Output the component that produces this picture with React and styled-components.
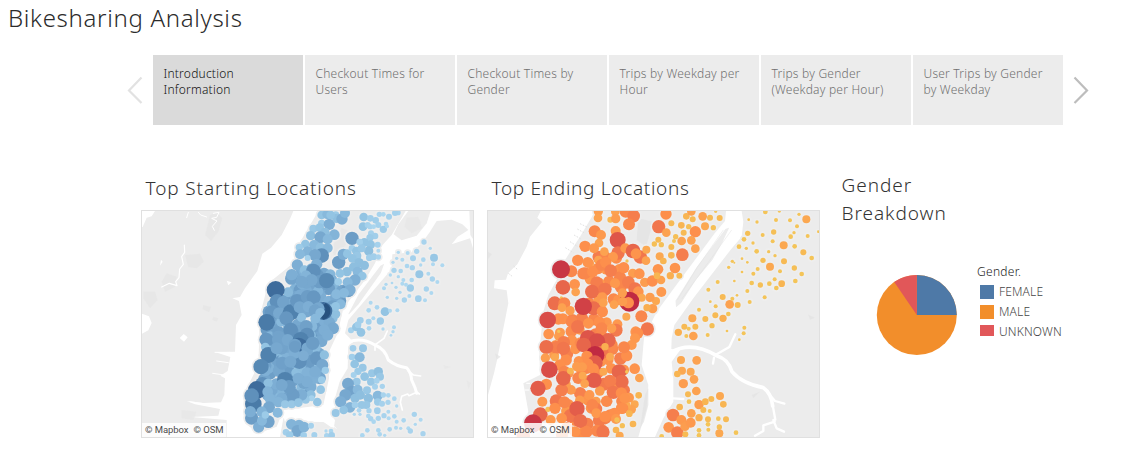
import React from "react";
import styled, { createGlobalStyle } from "styled-components";

const GlobalStyle = createGlobalStyle`
  * { box-sizing: border-box; }
  body { margin: 0; background: #fff; font-family: "Noto Sans", "Open Sans", sans-serif; font-weight: 300; }
`;

const Dashboard = styled.main`
  width: 1129px;
  height: 467px;
  overflow: hidden;
  background: #fff;
`;
const Title = styled.h1`
  margin: 0;
  padding: 1px 0 0 8px;
  height: 55px;
  font-size: 24px;
  line-height: 34px;
  font-weight: 300;
  letter-spacing: 0.68px;
  color: #2b2b2b;
`;
const StoryNav = styled.nav`
  display: flex;
  align-items: center;
  padding-left: 127px;
  height: 70px;
`;
const StoryPoints = styled.div`
  display: flex;
  gap: 2px;
  margin: 0 10px;
`;
const StoryPoint = styled.div`
  width: 150px;
  height: 70px;
  padding: 11px 8px 0 10.5px;
  font-size: 12px;
  line-height: 16px;
  letter-spacing: 0.22px;
  white-space: pre-line;
  background: ${(p) => (p.$active ? "#dadada" : "#ececec")};
  color: ${(p) => (p.$active ? "#111" : "#707070")};
`;
const Arrow = styled.svg`
  display: block;
  width: 16px;
  height: 28px;
  fill: none;
  stroke: ${(p) => (p.$dim ? "#e2e2e2" : "#bdbdbd")};
  stroke-width: 2.2;
`;
const Panels = styled.div`
  display: flex;
  padding: 46px 0 0 141px;
`;
const Panel = styled.section`
  width: ${(p) => p.$w}px;
`;
const PanelTitle = styled.h2`
  margin: ${(p) => (p.$tall ? "0" : "3px 0 -3px")};
  height: ${(p) => (p.$tall ? 56 : 39)}px;
  padding-left: 4.5px;
  font-size: 19px;
  line-height: 28px;
  font-weight: 300;
  letter-spacing: ${(p) => p.$track}px;
  white-space: pre-line;
  color: #333;
`;
const MapFrame = styled.div`
  position: relative;
  width: 333px;
  height: 228px;
  border: 1px solid #e0e0e0;
  overflow: hidden;
`;
const MapDrawing = styled.svg`
  display: block;
  width: 331px;
  height: 226px;
`;
const Attribution = styled.div`
  position: absolute;
  left: 0;
  bottom: 0;
  width: 84px;
  height: 14px;
  padding-left: 3px;
  display: flex;
  gap: 5px;
  font: 400 9.5px/14px Roboto, sans-serif;
  letter-spacing: -0.06px;
  color: #4c4c4c;
  background: rgba(255, 255, 255, 0.85);
  white-space: nowrap;
`;
const GenderChart = styled.div`
  display: flex;
  padding: 36px 0 0 39px;
`;
const Pie = styled.svg`
  display: block;
  width: 81px;
  height: 81px;
  margin-top: 12px;
`;
const Legend = styled.div`
  margin-left: 20px;
  font-size: 12px;
  color: #444;
`;
const LegendTitle = styled.div`
  height: 19px;
  line-height: 17px;
  color: #222;
  letter-spacing: 0.3px;
`;
const LegendItem = styled.div`
  display: flex;
  height: 20px;
  padding-left: 3px;
  line-height: 19px;
  letter-spacing: 0.15px;
`;
const Swatch = styled.span`
  width: 14px;
  height: ${(p) => p.$h}px;
  margin: 3px 5px 0 0;
  background: ${(p) => p.$color};
`;

/* Deterministic pseudo-random numbers, so the stations never move. */
function seeded(seed) {
  let s = seed;
  return () => {
    s = (s * 16807) % 2147483647;
    return s / 2147483647;
  };
}

/* Fills rows [y, left, right] with overlapping stations. */
function scatter(rows, step, seed, rMin, rMax) {
  const rnd = seeded(seed);
  const out = [];
  rows.forEach(([y, a, b]) => {
    for (let x = a; x <= b; x += step) {
      const r = rMin + (rMax - rMin) * rnd();
      out.push([x + (rnd() - 0.5) * step * 0.7, y + (rnd() - 0.5) * 22, r]);
    }
  });
  for (let i = out.length - 1; i > 0; i--) {
    const j = Math.floor(rnd() * (i + 1));
    [out[i], out[j]] = [out[j], out[i]];
  }
  return out;
}

const BLUES = [[6, 174, 216, 240], [9, 165, 209, 236], [13, 147, 196, 227], [17, 125, 174, 212], [21, 102, 151, 193], [24, 80, 130, 174], [27, 62, 108, 156]];
const REDS = [[7, 244, 196, 88], [10, 248, 181, 82], [13, 252, 162, 80], [17, 253, 143, 76], [20, 241, 118, 77], [25, 217, 77, 72], [28, 192, 42, 66]];

function shade(scale, v) {
  if (v <= scale[0][0]) return `rgb(${scale[0].slice(1).join(",")})`;
  for (let i = 1; i < scale.length; i++) {
    if (v <= scale[i][0]) {
      const [a, b] = [scale[i - 1], scale[i]];
      const t = (v - a[0]) / (b[0] - a[0]);
      return `rgb(${[1, 2, 3].map((k) => Math.round(a[k] + (b[k] - a[k]) * t)).join(",")})`;
    }
  }
  return `rgb(${scale[scale.length - 1].slice(1).join(",")})`;
}

const startDense = scatter(
  [[325, 475, 585], [350, 465, 605], [375, 455, 640], [400, 435, 615], [425, 412, 605], [450, 408, 595], [475, 405, 590], [500, 400, 590], [525, 400, 568], [550, 400, 560], [575, 407, 560], [600, 387, 557], [625, 392, 555], [650, 387, 552], [675, 387, 540], [698, 395, 530]],
  18, 71, 14, 20.5
);

const startStations = [
  [560,150,13],[577,148,15],[602,150,11],[560,175,11],[583,178,17],[535,191,12],[554,188,13],[570,202,14],[598,209,16],[527,212,14],[556,217,18],[578,223,15],[511,237,13],[493,247,11],[537,240,15],[556,247,14],[578,249,15],[518,260,16],[495,268,15],[560,272,22],[540,270,18],[518,279,9],[487,300,17],[545,298,17],[530,312,17],[508,315,14],[470,329,17],[535,318,22],[513,332,16],[553,350,20],[575,347,23],[530,345,18],[500,350,18],
  [605,160,14],[621,162,17],[630,144,15],[587,150,13],[651,220,20],[611,292,20],[625,268,17],[637,266,13],
  [686,156,13],[706,160,10],[684,185,13],[698,180,9],[722,166,10],[733,148,8],[745,148,7],[762,155,9],[789,143,8],[780,144,9],[705,185,8],[716,185,7],[730,180,9],[745,193,11],[753,177,7],[756,184,6],[708,205,9],[720,213,10],[705,218,11],[688,232,13],[674,231,10],[707,239,13],[728,239,9],[701,258,14],[730,257,6],[716,275,10],[730,276,8],[651,250,10],[664,258,13],[680,250,12],[667,272,12],[652,280,13],[672,293,14],[688,301,14],[703,278,10],[656,306,14],[636,320,14],[615,325,13],[668,320,15],[682,333,13],[660,345,17],[638,352,15],[610,350,11],[645,375,17],[627,384,15],[604,388,15],[617,418,15],[602,447,14],[589,432,14],[602,424,13],
  [422,375,27],[426,409,22],[410,442,21],[395,472,25],[445,412,19],[432,445,18],[467,442,24],[454,460,21],[486,408,21],[517,395,20],[536,397,21],[494,427,18],[520,425,17],[565,438,27],[550,430,18],[540,437,19],[556,444,15],[541,461,15],[594,490,18],[567,495,17],[578,510,17],[394,524,21],[391,546,13],[400,570,24],[378,605,23],[430,525,19],[440,550,19],[425,550,18],[467,495,22],[458,525,18],[516,510,22],[497,525,24],[491,545,27],[480,540,19],[493,590,22],[478,565,17],[466,590,18],[517,550,18],[533,535,20],[546,580,21],[568,570,14],[562,600,18],[571,616,11],[540,620,17],[560,645,11],[557,674,13],[528,690,14],[547,711,13],[530,700,9],[512,704,12],[500,690,17],[474,690,20],[450,645,24],[462,665,20],[440,660,18],[490,640,17],[516,650,17],[440,700,17],[430,711,16],[450,718,12],[470,718,12],[490,713,13],
  [382,658,22],[399,655,14],[366,675,27],[355,717,25],[350,692,22],[350,759,20],[346,740,17],[398,680,16],[404,700,16],[402,727,18],[380,740,16],[428,743,15],[400,770,19],[371,786,17],[381,767,15],[391,750,11],
  [469,778,16],[492,780,16],[487,798,18],[507,786,16],[528,782,9],[453,802,10],[464,810,11],[506,811,10],[538,810,9],[573,798,5],[588,798,7],[575,812,8],[590,811,10],
  [867,231,8],[886,250,5],[845,259,8],[818,264,6],[790,262,5],[897,278,12],[922,301,6],[785,280,5],[802,284,6],[834,280,9],[865,284,7],[894,298,6],[774,292,5],[816,303,7],[832,308,8],[857,300,5],[853,328,12],[880,326,6],[892,342,8],[777,316,8],[797,318,7],[766,330,5],[790,335,5],[805,345,6],[830,345,7],[907,351,6],[753,358,5],[771,354,4],[802,356,6],[826,369,11],[874,372,8],[889,384,6],[747,370,6],[783,367,5],[813,359,6],[795,382,5],[757,397,5],[785,400,5],[808,405,8],[850,401,10],[870,406,6],[823,393,6],[707,413,6],[726,427,7],[750,440,13],[765,437,6],[787,436,6],[701,436,7],[676,466,10],[701,470,9],[715,460,6],[736,468,11],[648,496,9],[664,486,13],[678,502,13],[669,479,10],[702,490,7],[744,492,5],[777,487,6],[774,500,5],[768,511,4],
  [654,550,10],[684,550,12],[651,576,10],[674,577,15],[659,597,13],[683,608,12],[669,619,11],[689,635,13],[711,625,12],[730,620,14],[735,635,12],[656,630,9],[665,650,12],[639,656,18],[650,681,19],[631,690,18],[617,710,17],[645,727,16],[626,735,13],[660,700,14],[668,674,15],[676,690,14],[696,676,12],[708,650,12],[725,647,9],[742,664,8],[720,665,9],[700,700,14],[694,720,12],[728,692,15],[728,711,11],[745,690,8],[727,737,10],[702,737,8],[680,720,12],[660,720,10],[672,736,7],[602,744,12],[707,761,8],[741,716,9],[760,691,7],[778,701,7],[759,712,8],[760,740,6],[747,752,8],[716,770,7],[730,760,8],[700,753,7],[785,723,5],[761,760,6],[785,770,6],[778,754,7],[797,790,5],[806,766,7],[838,748,8],[857,764,6],[841,778,5],[820,790,6],[826,798,8],[864,806,8],[783,788,6],[764,793,7],[730,796,7],[697,796,7],[734,808,7],[749,811,5],[682,811,7],[658,748,5],[675,748,5]
];

const endDense = scatter(
  [[285, 320, 440], [315, 315, 430], [345, 330, 430], [375, 350, 440], [410, 330, 420], [440, 330, 390], [470, 245, 410], [500, 240, 420], [530, 235, 415], [560, 230, 410], [590, 265, 430], [620, 265, 430], [650, 265, 435], [680, 270, 445], [710, 260, 440], [740, 260, 430], [770, 290, 400], [800, 290, 375]],
  32, 37, 14, 19.5
);

const endStations = [
  [355,139,14],[354,159,13],[406,140,13],[391,164,9],[407,161,14],[437,140,18],[461,153,19],[447,178,18],[344,199,18],[363,210,15],[407,198,15],[357,234,13],[315,244,17],[342,250,15],[413,225,24],[373,260,13],[293,286,17],[323,292,16],[414,264,20],[436,250,15],[459,258,22],[481,276,20],[499,254,12],[498,287,13],[468,266,16],[399,276,15],[355,285,13],[441,288,5],[274,319,18],[243,313,27],[249,367,22],[284,358,16],[287,381,13],[244,399,5],[315,325,18],[338,320,17],[365,300,18],[377,292,17],[392,317,19],[431,308,17],[458,325,14],[478,326,16],[350,353,19],[375,373,20],[336,380,21],[405,355,15],[445,352,19],[465,372,20],[475,380,16],[494,352,14],[517,348,17],[543,345,13],[534,313,16],[531,332,10],[571,332,11],[598,332,9],[585,309,16],[544,381,15],[518,431,14],[528,408,12],[510,397,14],[501,428,11],[485,398,12],
  [224,415,21],[253,415,18],[270,437,14],[246,428,13],[235,462,17],[203,465,25],[341,430,21],[310,424,26],[367,440,17],[367,397,15],[370,413,13],[415,405,16],[402,419,13],[430,390,16],[448,410,30],[445,413,17],[427,384,14],[428,410,14],[439,455,12],[484,454,18],[467,500,16],[502,492,20],[473,505,17],[465,520,15],[455,540,15],[440,572,17],[464,611,16],[478,639,13],[432,547,18],[206,507,16],[236,513,14],[236,499,5],[251,532,19],[228,547,19],[199,546,21],[250,550,20],[196,579,14],[225,577,12],[240,600,17],[208,614,25],[253,620,18],[199,658,17],[174,670,23],[187,710,15],[181,749,22],[204,733,8],[159,775,27],[212,765,15],[229,708,20],[225,730,17],[245,675,19],[250,640,22],[253,712,18],[271,752,20],[245,760,16],[291,731,23],[301,768,21],[320,800,18],[351,797,18],[369,801,20],[337,720,18],[349,745,15],[275,470,18],[293,485,20],[325,475,16],[358,471,17],[365,490,18],[395,490,14],[324,519,24],[385,526,22],[351,530,25],[311,540,22],[365,562,20],[345,571,28],[321,574,17],[345,594,23],[323,597,17],[340,612,17],[342,646,23],[307,606,14],[290,605,14],[308,632,12],[271,618,10],[314,656,13],[370,620,12],[417,620,22],[425,650,21],[390,648,19],[400,682,20],[424,684,17],[447,698,15],[476,691,10],[464,718,12],[455,733,13],[440,722,12],[434,700,16],[428,730,17],[403,745,17],[375,755,17],[408,762,15],[448,746,10],[427,782,8],[459,777,10],[408,795,10],[419,812,12],[411,765,8],[440,620,5],[130,812,20],[260,790,18],[246,810,18],[285,800,16],[390,575,12],[375,545,11],
  [558,147,17],[536,185,20],[574,175,9],[559,203,13],[604,181,10],[619,154,10],[634,139,13],[638,163,9],[626,185,8],[668,154,13],[690,158,9],[719,159,9],[707,139,5],[675,184,12],[700,188,8],[646,200,17],[611,203,9],[605,228,13],[634,226,13],[646,251,13],[607,269,19],[574,246,9],[574,271,10],[587,215,8],[582,228,6],[535,224,9],[523,237,8],[544,239,8],[539,274,12],[550,288,10],
  [856,141,7],[898,138,5],[957,148,5],[979,163,12],[806,164,4],[831,171,5],[888,165,6],[930,166,6],[951,184,6],[881,201,8],[848,210,6],[942,203,5],[983,213,6],[1015,200,4],[803,205,8],[792,223,7],[819,234,5],[777,245,7],[799,250,5],[878,229,6],[911,241,12],[932,215,7],[944,244,7],[830,259,7],[885,272,5],[866,260,5],[970,262,9],[995,279,7],[786,281,4],[757,289,5],[763,293,3],[802,292,4],[849,286,8],[870,305,12],[912,289,9],[943,309,8],[833,312,6],[900,319,6],[965,327,7],[746,307,5],[786,321,4],[820,326,6],[713,351,6],[763,348,4],[815,354,7],[841,360,8],[868,356,7],[884,343,6],[905,356,10],[946,348,7],[889,369,7],[685,374,6],[802,378,6],[854,397,6],[728,396,9],[757,401,6],[771,391,4],[691,410,4],[707,424,6],[749,418,13],[773,420,9],[809,411,6],[657,434,6],[637,460,12],[676,462,9],[706,451,9],[729,460,11],[745,447,7],[646,485,9],[613,485,9],[595,502,11],[626,491,6],[640,513,13],[619,513,6],[683,510,6],[696,482,8],[741,498,4],[793,488,6],[791,505,6],[778,524,4],
  [603,585,12],[650,586,13],[606,617,12],[592,627,10],[632,620,12],[642,643,13],[610,656,14],[649,678,13],[624,688,9],[627,710,7],[599,726,10],[657,719,14],[676,710,10],[694,702,9],[720,693,12],[730,718,10],[670,735,9],[689,738,6],[634,745,13],[579,750,19],[604,765,15],[566,787,16],[592,803,19],[615,784,14],[632,773,15],[657,758,11],[684,763,9],[715,761,7],[738,763,9],[684,778,7],[657,796,7],[718,786,8],[718,805,12],[685,794,6],[657,811,7],[616,808,9],[768,803,7],[545,814,7]
];

function Stations({ list, scale }) {
  return (
    <g>
      {list.map(([x, y, r], i) => (
        <circle key={"h" + i} cx={x} cy={y} r={r + 5} fill="#eeeeee" />
      ))}
      {list.map(([x, y, r], i) => (
        <circle key={i} cx={x} cy={y} r={r} fill={shade(scale, r)} />
      ))}
    </g>
  );
}

function StartMap() {
  return (
    <MapDrawing viewBox="21 138 993 678" preserveAspectRatio="none">
      <rect x="21" y="138" width="993" height="678" fill="#fff" />
      <g fill="#ececec">
        <path d="M21 138H475L466 160 440 210 408 248 382 266 367 318 330 370 315 396 292 400 312 408 320 450 303 480 300 560 242 562 286 576 278 618 256 632 270 640 268 690 258 712 205 714 155 708 180 718 255 732 250 752 168 756 275 765V816H21Z" />
        <path d="M550 138H812L770 210 738 245 720 295 690 345 625 430 608 505 582 560 582 640 565 720 445 735 425 785 370 805 330 775 325 690 370 600 375 450 400 355 480 290 490 240Z" />
        <path d="M820 138H887L875 175 845 212 800 226 776 208 790 178Z" />
        <path d="M905 168 950 164 982 178 1000 195 985 205 968 215 950 238 1005 220 1014 250V816H600L588 785 600 740 600 700 614 650 638 610 640 545 655 530 630 505 640 465 770 312 772 268 830 262 860 235 885 200Z" />
        <path d="M752 291 735 300 668 388 637 447 642 452 672 420 740 325Z" stroke="#fff" strokeWidth="5" />
        <path d="M1003 138H1014V222L1006 210ZM445 760 600 775 605 816H435Z" />
      </g>
      <g fill="#e6e6e6">
        <path d="M225 150 245 142 262 160 250 200 228 228 210 210ZM150 270 195 266 207 290 185 310 160 306ZM95 325 125 335 120 365 90 380 80 350ZM25 380 60 380 68 405 45 430 25 400ZM205 420 228 426 222 442 203 432ZM235 455 250 460 245 470 232 465ZM620 190 650 200 632 240 598 275 590 250Z" opacity=".75" />
        <path d="M140 735 185 740 175 765 140 760ZM815 158 850 155 862 190 830 205 808 185ZM925 600 948 606 930 612ZM995 645 1008 655 1000 672Z" opacity=".6" />
      </g>
      <path d="M21 138H60L50 154 35 158 23 186H21ZM21 446 42 454 50 474 40 496 21 506ZM146 507 158 517 147 530 134 519ZM78 284 83 290 75 302ZM275 347 290 352 280 361ZM445 752 500 732 575 730 600 766 596 792 565 770 450 772Z" fill="#fff" />
      <g fill="none" stroke="#fff" strokeLinecap="round" strokeLinejoin="round">
        <path d="M148 240 149 262 140 275 145 298 134 312 132 338 122 350 126 362 103 355 80 366" strokeWidth="3.5" />
        <path d="M190 142 197 150 215 156M235 145 252 142 245 157 230 160 246 168 232 184 238 196M160 142 155 158" strokeWidth="3" />
        <path d="M640 531Q680 516 720 540 750 552 760 585 785 605 815 608 828 622 830 645L840 668 845 685" strokeWidth="9" />
        <path d="M720 545V556M722 538 747 520 757 498M820 618 835 630 857 633M843 679 853 687M840 684 822 692 818 687 800 694 796 712 802 735" strokeWidth="5" />
        <path d="M240 562H285M245 588 280 593M233 625 268 630M165 710 248 722M575 745 585 763M568 755 603 790" strokeWidth="3" />
      </g>
      <Stations list={[...startDense, ...startStations]} scale={BLUES} />
      <path d="M572 414A27 27 0 0 1 566 464L558 458Q580 438 566 420Z" fill="#28527f" />
      <circle cx="480" cy="545" r="18" fill="#6c9dc6" />
      <circle cx="505" cy="572" r="16" fill="#7dadd3" />
    </MapDrawing>
  );
}

function EndMap() {
  return (
    <MapDrawing viewBox="24 138 993 678" preserveAspectRatio="none">
      <rect x="24" y="138" width="993" height="678" fill="#fff" />
      <g fill="#ececec">
        <path d="M24 138H182L172 158 186 171 150 215 140 245 128 268 112 298 84 325 78 344 44 346 42 370 80 376 85 415 74 470 65 515 50 590 42 625 24 690Z" />
        <path d="M346 138H738L735 168 704 205 600 345 530 440 492 518 485 600 505 660 500 730 475 816H110L145 740 130 655 180 630 178 560 190 440 205 390 230 345 255 285 300 215Z" />
        <path d="M785 138H1017V816H525L550 760 580 710 580 640 575 590 600 556 574 552 575 520 583 480 640 400 752 254 785 215 790 170Z" />
        <path d="M752 184 735 190 650 302 584 407 586 432 605 416 650 346 700 285 730 232Z" stroke="#fff" strokeWidth="5" />
      </g>
      <path d="M475 160 520 170 498 245 470 225ZM24 260 36 268 24 282ZM45 565 62 575 50 584ZM985 449 1005 458 990 464ZM815 690 840 680 820 699ZM495 690 505 670 505 720 492 770 480 790Z" fill="#e3e3e3" opacity=".7" />
      <path d="M755 195 690 285 605 402M730 195 650 310 592 405" fill="none" stroke="#e0e0e0" strokeWidth="2" opacity=".7" />
      <path d="M300 176 325 188M292 192 315 205M282 210 305 223M270 230 295 246M256 248 280 263M101 303 112 313M85 325 98 335" fill="none" stroke="#e2e2e2" strokeWidth="3" strokeDasharray="5 4" />
      <g fill="none" stroke="#fff" strokeLinecap="round" strokeLinejoin="round">
        <path d="M577 560Q635 528 710 572 745 582 756 620 785 655 850 668 874 684 878 723" strokeWidth="11" />
        <path d="M878 720 886 764M702 578 699 596M706 570 748 546 766 508M865 685 885 708 913 716M880 765 890 790 912 800M884 770 850 781 850 798 825 812M580 700 610 702" strokeWidth="7" />
        <path d="M140 655H175M135 675H160M125 748H160" strokeWidth="3" />
      </g>
      <Stations list={[...endDense, ...endStations]} scale={REDS} />
    </MapDrawing>
  );
}

const points = [
  "Introduction\nInformation",
  "Checkout Times for\nUsers",
  "Checkout Times by\nGender",
  "Trips by Weekday per\nHour",
  "Trips by Gender\n(Weekday per Hour)",
  "User Trips by Gender\nby Weekday",
];
const genders = [
  ["FEMALE", "#4e79a7", 14],
  ["MALE", "#f28e2b", 14],
  ["UNKNOWN", "#e15759", 11],
];

function MapPanel({ title, width, track, children }) {
  return (
    <Panel $w={width}>
      <PanelTitle $track={track}>{title}</PanelTitle>
      <MapFrame>
        {children}
        <Attribution>
          <span>© Mapbox</span>
          <span>© OSM</span>
        </Attribution>
      </MapFrame>
    </Panel>
  );
}

export default function App() {
  return (
    <Dashboard>
      <GlobalStyle />
      <Title>Bikesharing Analysis</Title>
      <StoryNav>
        <Arrow $dim viewBox="0 0 16 28"><path d="M14.5 1.5 2 14.5 14.5 27" /></Arrow>
        <StoryPoints>
          {points.map((p, i) => <StoryPoint key={p} $active={i === 0}>{p}</StoryPoint>)}
        </StoryPoints>
        <Arrow viewBox="0 0 16 28"><path d="M1.5 1.5 14 14.5 1.5 27" /></Arrow>
      </StoryNav>
      <Panels>
        <MapPanel title="Top Starting Locations" width={346} track={0.88}><StartMap /></MapPanel>
        <MapPanel title="Top Ending Locations" width={350} track={0.7}><EndMap /></MapPanel>
        <Panel $w={260}>
          <PanelTitle $tall $track={0.95}>{"Gender\nBreakdown"}</PanelTitle>
          <GenderChart>
            <Pie viewBox="0 0 81 81">
              <circle cx="40.8" cy="40" r="40" fill="#f28e2b" />
              <path d="M40.8 40V0A40 40 0 0 1 80.8 40Z" fill="#4e79a7" />
              <path d="M40.8 40 18.2 7A40 40 0 0 1 40.8 0Z" fill="#e15759" />
            </Pie>
            <Legend>
              <LegendTitle>Gender.</LegendTitle>
              {genders.map(([name, color, h]) => (
                <LegendItem key={name}><Swatch $color={color} $h={h} />{name}</LegendItem>
              ))}
            </Legend>
          </GenderChart>
        </Panel>
      </Panels>
    </Dashboard>
  );
}
